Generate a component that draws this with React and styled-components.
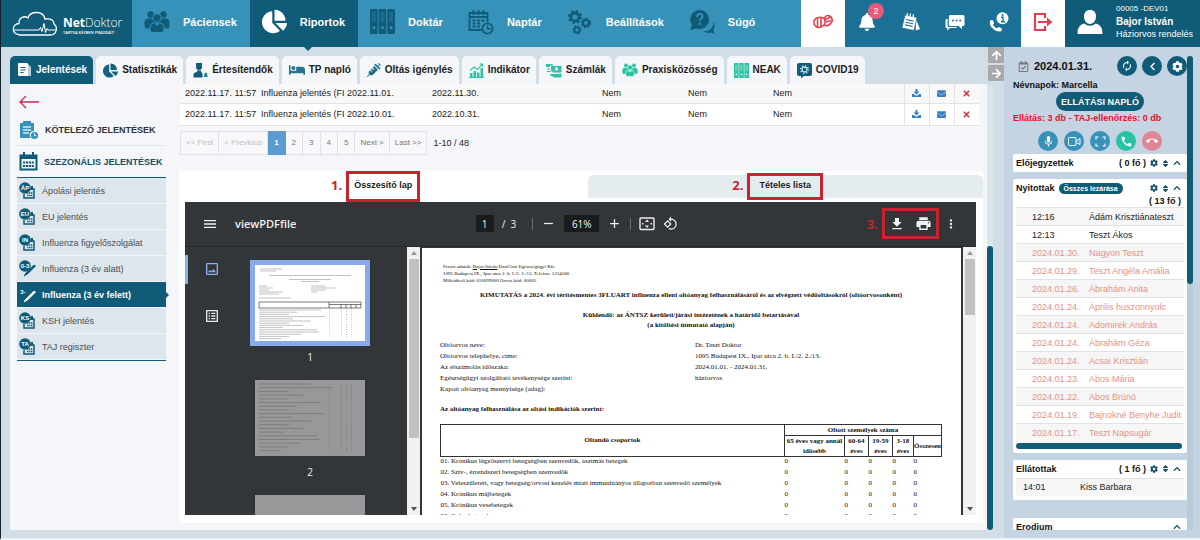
import React from 'react'
import styled, { createGlobalStyle, css } from 'styled-components'
import {
  FaArrowRight, FaArrowUp, FaBed, FaBell, FaChartPie, FaChevronLeft, FaChevronUp, FaCog,
  FaEnvelope, FaRegCalendarCheck, FaSort, FaSyringe, FaTimes
} from 'react-icons/fa'
import {
  MdAdd, MdAutorenew, MdCall, MdCallEnd, MdFileDownload, MdListAlt, MdMenu, MdMic, MdMoreVert,
  MdOutlineImage, MdPrint, MdRemove, MdRotate90DegreesCcw
} from 'react-icons/md'

const dark = '#0f5b78'
const blue = '#3692b9'
const green = '#2cc3a4'
const red = '#c8232f'

const GlobalStyle = createGlobalStyle`
  * { box-sizing: border-box; }
  body {
    margin: 0;
    font-family: "Liberation Sans", Arial, sans-serif;
    font-size: 9px;
    line-height: 12px;
    color: #222;
  }
  ul { list-style: none; margin: 0; padding: 0; }
  a { color: inherit; text-decoration: none; }
  p, h1, h2, h3 { margin: 0; font-size: inherit; }
  button, input { font: inherit; color: inherit; border: 0; margin: 0; padding: 0; background: none; }
  table { border-collapse: collapse; border-spacing: 0; }
  svg { display: block; flex: none; }
`

/* ---------- icons ---------- */

const Gear = ({ x, y, r }) => (
  <g fill='none' stroke='currentColor'>
    <circle cx={x} cy={y} r={r} strokeWidth={r * 0.7} />
    <circle cx={x} cy={y} r={r * 1.5} strokeWidth={r * 0.5} strokeDasharray={`${r * 0.6} ${r * 0.578}`} />
  </g>
)

const GearsIcon = () => (
  <svg width='26' height='26' viewBox='0 0 26 26'>
    <Gear x={8} y={8} r={4} />
    <Gear x={19} y={14} r={3} />
    <Gear x={10} y={21} r={2.6} />
  </svg>
)

const GroupIcon = ({ size = 26, edge = blue }) => (
  <svg width={size} height={size} viewBox='0 0 26 26' fill='currentColor'>
    <circle cx='6.5' cy='5.500' r='3.200' />
    <circle cx='19.500' cy='5.500' r='3.200' />
    <path d='M4 9.500h5q3 .5 3 4v6H2.500Q.5 19 .5 16.500V13q.500-3 3.500-3.500zM22 9.500h-5q-3 .5-3 4v6h9.500q2-.5 2-3V13q-.500-3-3.500-3.500z' />
    <circle cx='13' cy='9' r='4.200' stroke={edge} strokeWidth='1' />
    <path d='M10 13.800l3 2.500 3-2.500q4 .7 4 4.200v3q0 2.500-2.500 2.500h-9Q6 23.500 6 21v-3q0-3.500 4-4.200z' stroke={edge} strokeWidth='1' />
  </svg>
)

const BindersIcon = ({ size = 25, hole = blue }) => (
  <svg width={size} height={size} viewBox='0 0 24 24'>
    {[0, 8.3, 16.6].map(x => (
      <g key={x}>
        <rect x={x} width='7.4' height='24' rx='1' fill='currentColor' />
        <rect x={x + 1.8} y='2.5' width='3.8' height='10' fill={hole} opacity='.3' />
        <circle cx={x + 3.7} cy='18' r='1.4' fill={hole} />
      </g>
    ))}
  </svg>
)

const PlannerIcon = () => (
  <svg width='26' height='26' viewBox='0 0 26 26' fill='none' stroke='currentColor' strokeWidth='1.8'>
    <path d='M14 21H1.5V4h18v9M1.5 8h18M5.5 1v5M10.5 1v5M15.5 1v5' />
    <path d='M4.5 11.5h3M9 11.5h3M13.5 11.5h3M4.5 14.5h3M9 14.5h3M4.5 17.5h3M9 17.5h3' strokeWidth='2' />
    <circle cx='19.5' cy='19.5' r='5.2' />
    <path d='M19.5 16.5v3.2h3' strokeWidth='1.4' />
  </svg>
)

const HelpIcon = () => (
  <svg width='26' height='26' viewBox='0 0 26 26'>
    <path d='M24 12a8 8 0 0 1-9 10c2 2 5 2.500 7 1.500l3.500 1.500-1-4c1.500-3 1.500-6-.5-9z' fill='currentColor' />
    <path d='M10.500 1a9.500 9.500 0 1 1-3 18.500L1 21l2-5A9.500 9.500 0 0 1 10.500 1z' fill='currentColor' />
    <path d='M8 8c0-4 5.500-4 5.500-.800C13.500 9.300 10.800 9.400 10.800 12' fill='none' stroke={blue} strokeWidth='1.8' />
    <circle cx='10.800' cy='14.800' r='1.200' fill={blue} />
  </svg>
)

const PillsIcon = () => (
  <svg width='22' height='18' viewBox='0 0 22 18' fill='none' stroke='currentColor' strokeWidth='1.6'>
    <path d='M6.500 4.500A5 5 0 1 0 9 14V4.500C8.200 4.100 7.300 4.200 6.500 4.500zM9 4.500c5-.500 6 7 0 9.500' />
    <path d='M5.500 5v9M12 6l1.500-2.500a4 4 0 0 1 6.500 3.500M12 12c3.500 2 8-1 8.500-5M12 7.500l6.500-3.500M14 9l5-1.500' />
  </svg>
)

const NotesIcon = () => (
  <svg width='20' height='20' viewBox='0 0 20 20'>
    <path d='M14 5l5 12-4 1.500z' fill='#fff' />
    <path d='M4 3l12 2.500-3 13L.8 16z' fill='#fff' stroke='#1a7095' strokeWidth='.8' />
    <path d='M5 7.500l7.500 1.600M4.500 10.200l7.500 1.600M4 12.900l7.500 1.600' stroke='#1a7095' strokeWidth='1.100' />
    <path d='M6.500 1l-.5 3.500M9.500 1.500L9 5M12.500 2.100L12 5.600' stroke='#fff' strokeWidth='1.300' />
  </svg>
)

const ChatIcon = () => (
  <svg width='20' height='17' viewBox='0 0 20 17' fill='#fff'>
    <path d='M5 1h13q1.500 0 1.500 1.500v8q0 1.500-1.500 1.500h-1v3l-3.500-3H5q-1.200 0-1.200-1.500v-8Q3.800 1 5 1z' />
    <path d='M2.600 5H1.500Q.5 5 .5 6v7q0 1 1 1h.700v2.500L5 14h7l-1-1H4q-1.400 0-1.400-2z' />
    <g fill='#1a7095'><circle cx='8' cy='6.500' r='1' /><circle cx='11.600' cy='6.500' r='1' /><circle cx='15.200' cy='6.500' r='1' /></g>
  </svg>
)

const PhoneInfoIcon = () => (
  <svg width='20' height='20' viewBox='0 0 20 20'>
    <path d='M1 9c1-1.500 2.500-1.500 3.300 0l.7 2c0 1-1 1-1 1.700 1 2 2.500 3 4 3.500.9-.2 1-1.200 2-1.200l2.500 1.300c1 1 .3 2.700-1.500 3.200C5.500 20-.5 14 1 9z' fill='#fff' />
    <circle cx='13.500' cy='6.300' r='6' fill='#fff' />
    <path d='M12 5.300h2v4.500M12 9.800h4' fill='none' stroke='#1a7095' strokeWidth='1.400' />
    <circle cx='13.500' cy='3' r='1' fill='#1a7095' />
  </svg>
)

const LogoutIcon = () => (
  <svg width='20' height='20' viewBox='0 0 20 20' fill='none' stroke='currentColor' strokeWidth='2.200'>
    <path d='M12 6V2H2v16h10v-4M5 10h11' />
    <path d='M14 5.500l5.500 4.500-5.500 4.500z' fill='currentColor' stroke='none' />
  </svg>
)

const PersonIcon = () => (
  <svg width='26' height='26' viewBox='0 0 26 26' fill='#fff'>
    <path d='M13 1c4 0 6 2.700 6 6.500S16.500 15 13 15 7 11.500 7 7.500 9 1 13 1z' />
    <path d='M7.500 14.500c3 3 8 3 11 0 5 1.500 7 4 7 10.500H.5c0-6.500 2-9 7-10.500z' />
  </svg>
)

const CloudLogo = () => (
  <svg width='46' height='27' viewBox='0 0 46 27' fill='none' stroke='#fff' strokeWidth='1.300' strokeLinejoin='round'>
    <path d='M38 25H8C-1 24-.5 14 7 13.500 6.500 7 13 5.500 16 8 18 1 31 0 33 9c7-1 9 2 9 5 4 3 3 11-4 11' />
    <path d='M2 20h25l1.500-2.500 1.500 4 2-8 1.500 9 1.500-4 1 1.500h8' strokeWidth='1' />
  </svg>
)

const DocumentsIcon = () => (
  <svg width='15' height='16' viewBox='0 0 15 16'>
    <path d='M4 2h7l3 3v9H4z' fill='#fff' opacity='.7' />
    <rect x='1' y='1' width='10' height='13' rx='1' fill='#fff' />
    <path d='M3.500 5.500h5M3.500 8h5M3.500 10.500h3' stroke={dark} strokeWidth='1.200' />
  </svg>
)

const ReceptionIcon = () => (
  <svg width='15' height='15' viewBox='0 0 15 15' fill={dark}>
    <circle cx='6' cy='4' r='3' />
    <path d='M3 0h6v2.500H3zM4 7.500h4v2H4zM.5 11q1-2 3.500-2h4q1.500 0 1.500 2v3.500H.5z' />
    <path d='M11 13q0-3.500 1.700-3.500T14.500 13l.5 1h-4.500z' fill='#2b87a5' />
  </svg>
)

const IndicatorIcon = () => (
  <svg width='15' height='15' viewBox='0 0 15 15' fill={green}>
    <path d='M1 10h2.500v4H1zM4.500 8H7v6H4.500zM8 9.500h2.500V14H8zM11.500 5H14v9h-2.500z' />
    <path d='M1 7.500L5 4l3.500 2.500L13.500 1M10.500 1h3v3M0 14.600h15' fill='none' stroke={green} strokeWidth='1.100' />
  </svg>
)

const BillsIcon = () => (
  <svg width='16' height='15' viewBox='0 0 16 15' fill={green}>
    <path d='M0 1h6l2 1.500H4V4H0zM5 3h10.500v6.500H7L5 7z' />
    <circle cx='10.500' cy='6' r='1.700' fill='#f4f6fa' />
    <path d='M15 11v3H8l-4-2.500h6zM1 6h3M1 8.500h4' stroke={green} />
  </svg>
)

const VirusIcon = () => (
  <svg width='15' height='15' viewBox='0 0 15 15'>
    <path d='M2 0h11q2 0 2 2v9q0 2-2 2H7l-3 2.500V13H2q-2 0-2-2V2q0-2 2-2z' fill={dark} />
    <g fill='none' stroke='#bfe3ea'>
      <circle cx='7.500' cy='6.500' r='2.500' strokeWidth='1.300' />
      <circle cx='7.500' cy='6.500' r='4' strokeWidth='1.300' strokeDasharray='1.200 1.940' />
    </g>
  </svg>
)

const ClipboardIcon = () => (
  <svg width='20' height='20' viewBox='0 0 20 20'>
    <path d='M1 3h3V1h8v2h3v8a4 4 0 0 0-3 7H1z' fill={blue} />
    <path d='M4 7h8M4 10h8M4 13h6' stroke='#d9eaf2' strokeWidth='1.300' />
    <circle cx='15.500' cy='15.500' r='3.600' fill={blue} />
    <path d='M15.500 13.500v2.200h1.800' fill='none' stroke='#fff' />
  </svg>
)

const CalendarIcon = () => (
  <svg width='19' height='19' viewBox='0 0 19 19'>
    <path d='M1.500 3.500h16v14h-16z' fill='none' stroke={dark} strokeWidth='2' />
    <path d='M1 3h17v4H1z' fill={dark} />
    <path d='M5 0v4M14 0v4' stroke={dark} strokeWidth='2' />
    <path d='M4 10.500h11M4 14h11' stroke={dark} strokeWidth='2.200' strokeDasharray='2.200 .7' />
  </svg>
)

const ReportIcon = ({ label, vaccine, active }) => (
  <svg width='17' height='18' viewBox='0 0 17 18'>
    {vaccine
      ? <path d='M5 16l2-3 8-8 1.500 1-8 8-2 1z' fill={active ? '#fff' : dark} stroke={active ? '#fff' : dark} />
      : <g>
        <path d='M6 7h9v9H5v-4' fill='#dce6ec' stroke={dark} strokeWidth='1.500' />
        <path d='M8 11h6M8 13.500h6' stroke={dark} strokeWidth='1.400' strokeDasharray='1.400 .6' />
        <path d='M13 4v4' stroke={dark} strokeWidth='2' />
      </g>}
    {!active && <circle cx='6' cy='6' r='5.800' fill={dark} />}
    <text x={active ? 4 : 6} y='8' textAnchor='middle' fontSize='6' fontWeight='bold' fill='#fff'>{label}</text>
  </svg>
)

const TrayDownloadIcon = () => (
  <svg width='9' height='8' viewBox='0 0 9 8' fill='#3a7fbd'>
    <path d='M3.500 0h2v2.500h2l-3 3-3-3h2z' />
    <path d='M0 5h2l1.500 1.500h2L7 5h2v3H0z' />
  </svg>
)

const FitIcon = () => (
  <svg width='16' height='14' viewBox='0 0 16 14'>
    <rect x='1' y='1' width='14' height='11.500' rx='1' fill='none' stroke='#eee' strokeWidth='1.400' />
    <path d='M8 2.500L10 5H6zM8 11L10 8.500H6zM3 6h1.500v1.500H3zM11.500 6H13v1.500h-1.500z' fill='#eee' />
  </svg>
)

const CameraIcon = () => (
  <svg width='13' height='9' viewBox='0 0 13 9' fill='none' stroke='#fff'>
    <rect x='.5' y='.5' width='7.500' height='8' rx='1' /><path d='M8.500 4l3.500-2.500v6L8.500 5.500' />
  </svg>
)

const FrameIcon = () => (
  <svg width='11' height='11' viewBox='0 0 11 11' fill='none' stroke='#fff' strokeWidth='1.200'>
    <path d='M1 3.500V1h2.500M7.500 1H10v2.500M10 7.500V10H7.500M3.500 10H1V7.500' />
  </svg>
)

/* ---------- header ---------- */

const StyledApp = styled.div`
  display: flex;
  flex-direction: column;
  height: 100vh;
  overflow: hidden;
  border-left: 1px solid #16232b;
  border-bottom: 2px solid #edf4f9;
  background: #d1dee7;
`
const StyledHeader = styled.header`
  display: flex;
  flex: none;
  height: 47px;
  color: #fff;
  background: ${blue};
`
const StyledLogo = styled.a`
  display: flex;
  align-items: center;
  gap: 5px;
  width: 131px;
  padding-left: 11px;
  background: ${dark};
`
const StyledLogoText = styled.span`
  display: flex;
  flex-direction: column;
  padding-top: 5px;
  font: 300 12px/14px "Open Sans", sans-serif;
  b { font-weight: 700; }
  small { font-size: 4px; line-height: 6px; font-weight: 600; white-space: nowrap; }
`
const StyledNav = styled.nav`
  display: flex;
  flex: 1;
`
const StyledNavItem = styled.a`
  position: relative;
  display: flex;
  align-items: center;
  gap: 13px;
  padding: 0 13px 4px 12px;
  font-size: 11px;
  font-weight: bold;
  background: ${props => props.$active ? dark : 'transparent'};
  svg { color: ${props => props.$active ? '#fff' : dark}; }
  ${props => props.$active && css`
    &::after {
      content: '';
      position: absolute;
      top: 100%;
      left: 50%;
      border: 4px solid transparent;
      border-top-color: ${dark};
    }
  `}
`
const StyledTool = styled.button`
  position: relative;
  display: flex;
  align-items: center;
  justify-content: center;
  width: 44px;
  padding-bottom: 3px;
  color: ${props => props.$light ? '#e0404f' : '#fff'};
  background: ${props => props.$light ? '#fff' : '#1a7095'};
`
const StyledBadge = styled.span`
  position: absolute;
  top: 3px;
  right: 5px;
  width: 16px;
  border-radius: 8px;
  line-height: 16px;
  text-align: center;
  background: #ec5a7b;
`
const StyledUser = styled.div`
  display: flex;
  align-items: center;
  gap: 13px;
  width: 135px;
  padding: 0 0 4px 12px;
  background: ${dark};
  white-space: nowrap;
`
const StyledUserText = styled.div`
  p { font-size: 8px; line-height: 12px; }
  h2 { font-size: 10px; line-height: 13px; }
  p:last-child { font-size: 9px; line-height: 13px; }
`

/* ---------- main column ---------- */

const StyledBody = styled.div`
  display: flex;
  flex: 1;
  min-height: 0;
`
const StyledMain = styled.main`
  display: flex;
  flex-direction: column;
  flex: 1;
  min-width: 0;
  padding: 9px 0 8px 9px;
`
const StyledTabs = styled.nav`
  display: flex;
  flex: none;
  gap: 3px;
  height: 28px;
`
const StyledTab = styled.a`
  display: flex;
  align-items: center;
  gap: 4px;
  padding: 0 6px 0 7px;
  border-radius: 5px 5px 0 0;
  font-size: 10px;
  font-weight: bold;
  white-space: nowrap;
  color: ${props => props.$active ? '#fff' : '#222'};
  background: ${props => props.$active ? dark : '#f4f6fa'};
`
const StyledPanel = styled.div`
  display: flex;
  flex: 1;
  gap: 13px;
  min-height: 0;
  overflow: hidden;
  padding: 0 4px 0 7px;
  background: #f4f6fa;
`
const StyledGutter = styled.div`
  display: flex;
  flex-direction: column;
  flex: none;
  width: 17px;
  padding-bottom: 8px;
`
const StyledScrollTrack = styled.div`
  display: flex;
  flex-direction: column;
  justify-content: flex-end;
  flex: 1;
  width: 6px;
  margin-top: 3px;
  background: #d9e7ec;
`
const StyledScrollThumb = styled.div`
  height: ${props => props.$size};
  border-radius: 3px;
  background: ${dark};
`
const StyledMoveBtn = styled.button`
  display: flex;
  align-items: center;
  justify-content: center;
  width: 16px;
  height: 16px;
  margin: 0 0 2px 1px;
  color: #fff;
  background: #a6a8a9;
`

/* ---------- left menu ---------- */

const StyledMenu = styled.aside`
  flex: none;
  width: 149px;
`
const StyledBack = styled.button`
  display: block;
  height: 30px;
  padding: 6px 0 0 2px;
`
const StyledSection = styled.a`
  display: flex;
  align-items: center;
  gap: 6px;
  height: 32px;
  padding-left: 2px;
  border-bottom: 1px solid ${props => props.$open ? dark : '#e0e5ea'};
  font-weight: bold;
  white-space: nowrap;
  color: ${props => props.$open ? '#17506a' : '#333'};
`
const StyledMenuItem = styled.a`
  position: relative;
  display: flex;
  align-items: center;
  gap: 6px;
  height: 26px;
  padding-left: 2px;
  border-bottom: 1px solid #f2f6f8;
  color: #4a4f54;
  background: #dce6ec;
  ${props => props.$active && css`
    font-weight: bold;
    color: #fff;
    background: ${dark};
    &::after {
      content: '';
      position: absolute;
      left: 100%;
      border: 3px solid transparent;
      border-left-color: ${dark};
    }
  `}
`
const StyledMenuList = styled.ul`
  border-bottom: 1px solid ${dark};
`

/* ---------- report list ---------- */

const StyledContent = styled.section`
  display: flex;
  flex-direction: column;
  flex: 1;
  min-width: 0;
`
const StyledReportTable = styled.table`
  width: calc(100% - 5px);
  margin-left: 1px;
  table-layout: fixed;
  background: #fff;
  td {
    height: 22px;
    padding: 0 0 0 5px;
    border-bottom: 1px solid #e3e3e3;
    white-space: nowrap;
  }
  tr:first-child td { height: 19px; background: #f8f8f9; }
`
const StyledActionCell = styled.td`
  && { padding: 0; border-left: 1px solid #e3e3e3; }
  button { display: block; margin: auto; }
`
const StyledPager = styled.nav`
  display: flex;
  align-items: center;
  height: 24px;
  margin: 5px 0 16px 1px;
`
const StyledPageBtn = styled.button`
  height: 24px;
  padding: 0 ${props => props.$wide ? '5px' : '6px'};
  border: 1px solid #e1e3e8;
  border-left-width: ${props => props.$first ? '1px' : '0'};
  font-size: 8px;
  color: ${props => props.disabled ? '#b9bcc0' : '#777'};
  background: #f8f8fa;
  ${props => props.$active && css`
    border-color: #5b9bd1;
    font-weight: bold;
    color: #fff;
    background: #5b9bd1;
  `}
`
const StyledTotal = styled.span`
  margin-left: 6px;
`

/* ---------- pdf viewer ---------- */

const StyledViewerCard = styled.div`
  display: flex;
  flex-direction: column;
  flex: 1;
  min-height: 0;
  margin-bottom: 7px;
  padding-bottom: 8px;
  background: #fff;
`
const StyledViewTabs = styled.div`
  display: grid;
  grid-template-columns: 408fr 395fr;
  align-items: center;
  height: 31px;
`
const StyledViewTab = styled.div`
  display: flex;
  align-items: center;
  justify-content: center;
  height: ${props => props.$active ? '31px' : '23px'};
  border-radius: 5px 5px 0 0;
  background: ${props => props.$active ? '#fff' : '#e5ecf0'};
`
const StyledMark = styled.span`
  position: relative;
  display: flex;
  align-items: center;
  justify-content: center;
  border: 3px solid ${red};
  height: ${props => props.$tall ? '31px' : '27px'};
  padding: 0 ${props => props.$pad}px;
  gap: 10px;
  font-weight: bold;
  &:is(button) { padding-bottom: 3px; }
`
const StyledMarkNo = styled.b`
  position: absolute;
  right: 100%;
  margin-right: 7px;
  font: 700 13px/18px "Open Sans", sans-serif;
  color: ${red};
`
const StyledViewer = styled.div`
  display: flex;
  flex-direction: column;
  flex: 1;
  min-height: 0;
  margin: 0 7px 0 6px;
  font-family: "Open Sans", sans-serif;
  color: #f1f1f1;
  background: #323639;
`
const StyledToolbar = styled.div`
  display: grid;
  grid-template-columns: 270fr auto 276fr;
  align-items: center;
  flex: none;
  height: 45px;
  padding: 0 18px 0 17px;
  border-bottom: 1px solid #26292b;
`
const StyledToolGroup = styled.div`
  display: flex;
  align-items: center;
  justify-content: ${props => props.$end ? 'flex-end' : 'flex-start'};
  gap: ${props => props.$gap}px;
  font-size: 10px;
  h3 { font-size: 11px; font-weight: 600; }
  button { display: block; }
`
const StyledNumberInput = styled.input`
  width: ${props => props.$wide ? '35px' : '18px'};
  height: 17px;
  text-align: center;
  background: #191b1c;
`
const StyledDivider = styled.span`
  width: 1px;
  height: 12px;
  margin-left: ${props => props.$far ? '8px' : '0'};
  background: #6b6e70;
`
const StyledPanes = styled.div`
  display: flex;
  flex: 1;
  min-height: 0;
  overflow: hidden;
`
const StyledRail = styled.div`
  display: flex;
  flex-direction: column;
  align-items: center;
  flex: none;
  width: 53px;
  padding-top: 8px;
`
const StyledRailBtn = styled.button`
  display: flex;
  align-items: center;
  justify-content: center;
  width: 53px;
  height: 29px;
  margin-bottom: 18px;
  border-left: 3px solid ${props => props.$active ? '#8ab0f0' : 'transparent'};
  border-right: 3px solid transparent;
  color: ${props => props.$active ? '#8ab0f0' : '#e8e8e8'};
`
const StyledThumbs = styled.div`
  flex: none;
  width: 169px;
  padding: 13px 0 0 12px;
  overflow: hidden;
`
const StyledThumb = styled.figure`
  width: 120px;
  margin: 0 0 10px;
  text-align: center;
  font-size: 10px;
  svg {
    width: 120px;
    height: 86px;
    border: 5px solid ${props => props.$active ? '#86abe8' : 'transparent'};
    background: ${props => props.$active ? '#fff' : '#98989a'};
    background-clip: padding-box;
  }
  figcaption { line-height: 16px; padding-top: 3px; }
`
const StyledPdfScroll = styled.div`
  display: flex;
  flex-direction: column;
  flex: none;
  align-items: center;
  width: 13px;
  color: #505050;
  background: #f1f1f1;
  svg { margin: 4px 0; }
`
const StyledPdfThumb = styled.div`
  width: 10px;
  flex: ${props => props.$share};
  background: #c1c1c1;
`
const StyledPdfRest = styled.div`
  flex: ${props => props.$share};
`

/* ---------- pdf page ---------- */

const StyledPage = styled.article`
  flex: 1;
  min-width: 0;
  overflow: hidden;
  margin: 1px 2px 0;
  padding: 15px 19px 0 18px;
  font: 7px/11px "Liberation Serif", "Times New Roman", serif;
  color: #111;
  background: #fff;
  h2 { text-align: center; line-height: 10px; margin-bottom: 10px; }
`
const StyledPractice = styled.p`
  && { margin: 0 0 6px 3px; }
  font-size: 5px;
  line-height: 7px;
`
const StyledFacts = styled.dl`
  display: grid;
  grid-template-columns: 255fr 247fr;
  margin: 0 0 9px;
  dt, dd { margin: 0; min-height: 11px; }
`
const StyledDoseTable = styled.table`
  width: 100%;
  margin-top: 9px;
  table-layout: fixed;
  th { border: 1px solid #333; padding: 0; line-height: 10px; }
  td { padding: 0; height: 11px; line-height: 9px; }
`

/* ---------- right sidebar ---------- */

const StyledSide = styled.aside`
  display: flex;
  flex: none;
  width: 196px;
  padding: 9px 7px 8px 9px;
  background: #c5d4e2;
`
const StyledSideScroll = styled.div`
  flex: 1;
  min-width: 0;
  overflow: hidden;
  font-weight: bold;
  color: #111;
`
const StyledSideTrack = styled.div`
  width: 6px;
  background: #b9cbd9;
`
const StyledDateRow = styled.div`
  display: flex;
  align-items: center;
  gap: 5px;
  padding-left: 5px;
  margin-bottom: 3px;
  h2 { flex: 1; font-size: 11px; }
`
const StyledRound = styled.button`
  display: flex;
  align-items: center;
  justify-content: center;
  width: 20px;
  height: 20px;
  border-radius: 10px;
  color: #fff;
  background: ${props => props.$color || dark};
`
const StyledLogBtn = styled.button`
  display: block;
  height: 19px;
  margin: 1px auto;
  padding: 0 5px;
  border-radius: 10px;
  font-weight: bold;
  color: #fff;
  background: ${dark};
`
const StyledAlert = styled.p`
  color: #e3122a;
  white-space: nowrap;
`
const StyledCalls = styled.div`
  display: flex;
  justify-content: center;
  gap: 6px;
  margin: 7px 0 3px;
`
const StyledCard = styled.section`
  margin-bottom: ${props => props.$gap || 7}px;
  padding: 0 3px ${props => props.$bottom || 0}px;
  border-radius: 2px;
  background: #fff;
`
const StyledCardHead = styled.header`
  display: flex;
  flex-wrap: wrap;
  align-items: center;
  gap: 0 4px;
  padding-right: 3px;
  color: #111;
  h3 { line-height: 18px; }
  svg { color: #17506a; }
`
const StyledCount = styled.span`
  margin-left: auto;
  ${props => props.$below && css`
    order: 2;
    width: 100%;
    margin-top: -2px;
    text-align: right;
  `}
`
const StyledHeadIcons = styled.span`
  display: flex;
  align-items: center;
  gap: 3px;
  margin-left: ${props => props.$push ? 'auto' : '0'};
`
const StyledPill = styled.button`
  height: 11px;
  padding: 0 5px;
  border-radius: 6px;
  font-size: 7px;
  line-height: 11px;
  font-weight: bold;
  color: #fff;
  background: ${dark};
`
const StyledPatients = styled.table`
  width: 100%;
  table-layout: fixed;
  font-weight: normal;
  td {
    height: 18px;
    padding: 0;
    border-top: 1px solid #e1e1e1;
    white-space: nowrap;
  }
  td:first-child { width: ${props => props.$indent + 57}px; padding-left: ${props => props.$indent}px; }
  tr:nth-child(odd) td { background: #f6f6f6; }
`
const StyledPatient = styled.tr`
  color: ${props => props.$late ? '#e59384' : '#222'};
`
const StyledHScroll = styled.div`
  height: 6px;
  margin: 1px 2px 0 0;
  border-radius: 3px;
  background: ${dark};
`

/* ---------- data ---------- */

const nav = [
  { txt: 'Páciensek', icon: <GroupIcon /> },
  { txt: 'Riportok', icon: <FaChartPie size={25} />, active: true },
  { txt: 'Doktár', icon: <BindersIcon /> },
  { txt: 'Naptár', icon: <PlannerIcon /> },
  { txt: 'Beállítások', icon: <GearsIcon /> },
  { txt: 'Súgó', icon: <HelpIcon /> }
]

const tabs = [
  { txt: 'Jelentések', icon: <DocumentsIcon />, active: true },
  { txt: 'Statisztikák', icon: <FaChartPie size={15} color='#17607d' /> },
  { txt: 'Értesítendők', icon: <ReceptionIcon /> },
  { txt: 'TP napló', icon: <FaBed size={16} color='#27758f' /> },
  { txt: 'Oltás igénylés', icon: <FaSyringe size={14} color='#27708b' /> },
  { txt: 'Indikátor', icon: <IndicatorIcon /> },
  { txt: 'Számlák', icon: <BillsIcon /> },
  { txt: 'Praxisközösség', icon: <GroupIcon size={16} edge='#f4f6fa' />, tint: green },
  { txt: 'NEAK', icon: <BindersIcon size={15} hole='#f4f6fa' />, tint: green },
  { txt: 'COVID19', icon: <VirusIcon /> }
]

const StyledTint = styled.span`
  color: ${props => props.$color || 'inherit'};
`

const menu = [
  { txt: 'Ápolási jelentés', label: 'ÁP' },
  { txt: 'EU jelentés', label: 'EU' },
  { txt: 'Influenza figyelőszolgálat', label: 'IN' },
  { txt: 'Influenza (3 év alatt)', label: '0-3', vaccine: true },
  { txt: 'Influenza (3 év felett)', label: '3-', vaccine: true, active: true },
  { txt: 'KSH jelentés', label: 'KS' },
  { txt: 'TAJ regiszter', label: 'TA' }
]

const reports = [
  ['2022.11.17. 11:57', 'Influenza jelentés (FI', '2022.11.01.', '2022.11.30.'],
  ['2022.11.17. 11:57', 'Influenza jelentés (FI', '2022.10.01.', '2022.10.31.']
]

const facts = [
  ['Oltóorvos neve:', 'Dr. Teszt Doktor'],
  ['Oltóorvos telephelye, címe:', '1095 Budapest IX., Ipar utca 2. b. I./2. 2./13.'],
  ['Az elszámolás időszaka:', '2024.01.01. - 2024.01.31.'],
  ['Egészségügyi szolgáltató tevékenysége szerint:', 'háziorvos'],
  ['Kapott oltóanyag mennyisége (adag):', '']
]

const groups = [
  '01. Krónikus légzőszervi betegségben szenvedők, asztmás betegek',
  '02. Szív-, érrendszeri betegségben szenvedők',
  '03. Veleszületett, vagy betegség/orvosi kezelés miatt immunhiányos állapotban szenvedő személyek',
  '04. Krónikus májbetegek',
  '05. Krónikus vesebetegek',
  '06. Cukorbetegek'
]

const opened = [
  ['12:16', 'Ádám Krisztiánateszt'],
  ['12:13', 'Teszt Ákos'],
  ['2024.01.30.', 'Nagyon Teszt'],
  ['2024.01.29.', 'Teszt Angéla Amália'],
  ['2024.01.26.', 'Ábrahám Anita'],
  ['2024.01.24.', 'Április huszonnyolc'],
  ['2024.01.24.', 'Adomirek András'],
  ['2024.01.24.', 'Ábrahám Géza'],
  ['2024.01.24.', 'Acsai Krisztián'],
  ['2024.01.23.', 'Abos Mária'],
  ['2024.01.22.', 'Abos Brúnó'],
  ['2024.01.19.', 'Bajnokné Benyhe Judit'],
  ['2024.01.17.', 'Teszt Napsugár']
]

/* ---------- parts ---------- */

const Header = () => (
  <StyledHeader>
    <StyledLogo href='#'>
      <CloudLogo />
      <StyledLogoText>
        <span><b>Net</b>Doktor</span>
        <small>TARTSA KÉZBEN PRAXISÁT!</small>
      </StyledLogoText>
    </StyledLogo>
    <StyledNav>
      {nav.map(item => (
        <StyledNavItem key={item.txt} href='#' $active={item.active}>{item.icon}{item.txt}</StyledNavItem>
      ))}
    </StyledNav>
    <StyledTool $light aria-label='Gyógyszerek'><PillsIcon /></StyledTool>
    <StyledTool aria-label='Értesítések'><FaBell size={18} /><StyledBadge>2</StyledBadge></StyledTool>
    <StyledTool aria-label='Jegyzetek'><NotesIcon /></StyledTool>
    <StyledTool aria-label='Üzenetek'><ChatIcon /></StyledTool>
    <StyledTool aria-label='Telefon'><PhoneInfoIcon /></StyledTool>
    <StyledTool $light aria-label='Kilépés'><LogoutIcon /></StyledTool>
    <StyledUser>
      <PersonIcon />
      <StyledUserText>
        <p>00005 -DEV01</p>
        <h2>Bajor István</h2>
        <p>Háziorvos rendelés</p>
      </StyledUserText>
    </StyledUser>
  </StyledHeader>
)

const Menu = () => (
  <StyledMenu>
    <StyledBack aria-label='Vissza'>
      <svg width='20' height='14' viewBox='0 0 20 14' fill='none' stroke='#c92a4b' strokeWidth='1.3'>
        <path d='M7 1L1 7l6 6M1 7h19' />
      </svg>
    </StyledBack>
    <StyledSection href='#'><ClipboardIcon />KÖTELEZŐ JELENTÉSEK</StyledSection>
    <StyledSection href='#' $open><CalendarIcon />SZEZONÁLIS JELENTÉSEK</StyledSection>
    <StyledMenuList>
      {menu.map(item => (
        <li key={item.txt}>
          <StyledMenuItem href='#' $active={item.active}>
            <ReportIcon label={item.label} vaccine={item.vaccine} active={item.active} />
            {item.txt}
          </StyledMenuItem>
        </li>
      ))}
    </StyledMenuList>
  </StyledMenu>
)

const Reports = () => (
  <StyledReportTable>
    <colgroup>
      <col width='76' /><col width='86' /><col width='85' /><col width='170' />
      <col width='86' /><col width='85' /><col /><col width='25' /><col width='25' /><col width='25' />
    </colgroup>
    <tbody>
      {reports.map(([date, name, from, to]) => (
        <tr key={from}>
          <td>{date}</td><td>{name}</td><td>{from}</td><td>{to}</td>
          <td>Nem</td><td>Nem</td><td>Nem</td>
          <StyledActionCell><button aria-label='Letöltés'><TrayDownloadIcon /></button></StyledActionCell>
          <StyledActionCell><button aria-label='Küldés'><FaEnvelope size={9} color='#3a7fbd' /></button></StyledActionCell>
          <StyledActionCell><button aria-label='Törlés'><FaTimes size={9} color='#d8434e' /></button></StyledActionCell>
        </tr>
      ))}
    </tbody>
  </StyledReportTable>
)

const Pager = () => (
  <StyledPager>
    <StyledPageBtn disabled $first $wide>&lt;&lt; First</StyledPageBtn>
    <StyledPageBtn disabled $wide>&lt; Previous</StyledPageBtn>
    {[1, 2, 3, 4, 5].map(n => <StyledPageBtn key={n} $active={n === 1}>{n}</StyledPageBtn>)}
    <StyledPageBtn $wide>Next &gt;</StyledPageBtn>
    <StyledPageBtn $wide>Last &gt;&gt;</StyledPageBtn>
    <StyledTotal>1-10 / 48</StyledTotal>
  </StyledPager>
)

const textLines = [52, 74, 30, 44, 30, 62, 38, 30, 66, 34, 52, 30, 44, 24, 58, 60, 42, 30, 22]

const PageThumb = ({ no, active }) => (
  <StyledThumb $active={active}>
    <svg viewBox='0 0 110 76' preserveAspectRatio='none' stroke={active ? '#999' : '#6c6c6e'} strokeWidth='.6' fill='none'>
      {active && (
        <g>
          <path d='M5 4h22M5 6h16M14 10.500h82M34 14.500h42M46 16.500h18' />
          <path d='M4 21h8M4 23h14M4 25h10M4 27h24M4 29h20M56 21h14M56 23h24M56 25h15M56 27h6M4 33h32' />
          <path d='M4 37h102v6H4zM74 37v6M74 39.500h32M86 39.500v3.500M91 39.500v3.500M96 39.500v3.500M101 39.500v3.500' stroke='#222' />
        </g>
      )}
      {no < 3 && textLines.slice(active ? 5 : 0).map((w, i) => (
        <path key={i} d={`M4 ${(active ? 45 : 4) + i * (active ? 2.2 : 3.7)}h${w}`} />
      ))}
      {no < 3 && <path d={`M74.500 ${active ? 44 : 4}V72M86.500 ${active ? 44 : 4}V72M91.500 ${active ? 44 : 4}V72M96.500 ${active ? 44 : 4}V72`} strokeDasharray='1 1.5' />}
    </svg>
    {no < 3 && <figcaption>{no}</figcaption>}
  </StyledThumb>
)

const PdfScroll = ({ share, rest }) => (
  <StyledPdfScroll>
    <svg width='6' height='4' viewBox='0 0 6 4' fill='#999'><path d='M0 4l3-4 3 4z' /></svg>
    <StyledPdfThumb $share={share} />
    <StyledPdfRest $share={rest} />
    <svg width='6' height='4' viewBox='0 0 6 4' fill='currentColor'><path d='M0 0l3 4 3-4z' /></svg>
  </StyledPdfScroll>
)

const PdfPage = () => (
  <StyledPage>
    <StyledPractice>
      Praxis adatok: <u>Bajor István</u> DariCom Egészségügyi Kft.<br />
      1095 Budapest IX., Ipar utca 2. b. I./2. 2./13. Telefon: 1234566<br />
      Működtető kód: 010099000 Orvos kód: 00005
    </StyledPractice>
    <h2>KIMUTATÁS a 2024. évi térítésmentes 3FLUART influenza elleni oltóanyag felhasználásáról és az elvégzett védőoltásokról (oltóorvosonként)</h2>
    <h2>Küldendő: az ÁNTSZ kerületi/járási intézetének a határidő betartásával<br />(a kitöltési útmutató alapján)</h2>
    <StyledFacts>
      {facts.map(([label, value]) => (
        <React.Fragment key={label}><dt>{label}</dt><dd>{value}</dd></React.Fragment>
      ))}
    </StyledFacts>
    <b>Az oltóanyag felhasználása az oltási indikációk szerint:</b>
    <StyledDoseTable>
      <colgroup>
        <col /><col width='60' /><col width='24' /><col width='24' /><col width='21' /><col width='28' />
      </colgroup>
      <thead>
        <tr><th rowSpan='2'>Oltandó csoportok</th><th colSpan='5'>Oltott személyek száma</th></tr>
        <tr>
          <th>65 éves vagy annál idősebb</th><th>60-64 éves</th><th>19-59 éves</th><th>3-18 éves</th><th>Összesen</th>
        </tr>
      </thead>
      <tbody>
        {groups.map(g => (
          <tr key={g}><td>{g}</td><td>0</td><td>0</td><td>0</td><td>0</td><td>0</td></tr>
        ))}
      </tbody>
    </StyledDoseTable>
  </StyledPage>
)

const Viewer = () => (
  <StyledViewerCard>
    <StyledViewTabs>
      <StyledViewTab $active>
        <StyledMark as='button' $tall $pad={5}><StyledMarkNo>1.</StyledMarkNo>Összesítő lap</StyledMark>
      </StyledViewTab>
      <StyledViewTab>
        <StyledMark as='button' $pad={9}><StyledMarkNo>2.</StyledMarkNo>Tételes lista</StyledMark>
      </StyledViewTab>
    </StyledViewTabs>
    <StyledViewer>
      <StyledToolbar>
        <StyledToolGroup $gap={17}>
          <button aria-label='Menü'><MdMenu size={16} /></button>
          <h3>viewPDFfile</h3>
        </StyledToolGroup>
        <StyledToolGroup $gap={8}>
          <StyledNumberInput aria-label='Oldal' defaultValue='1' />
          <span>/&nbsp; 3</span>
          <StyledDivider $far />
          <button aria-label='Kicsinyítés'><MdRemove size={15} /></button>
          <StyledNumberInput $wide aria-label='Nagyítás' defaultValue='61%' />
          <button aria-label='Nagyítás növelése'><MdAdd size={15} /></button>
          <StyledDivider />
          <button aria-label='Oldalhoz igazítás'><FitIcon /></button>
          <button aria-label='Forgatás'><MdRotate90DegreesCcw size={15} /></button>
        </StyledToolGroup>
        <StyledToolGroup $end $gap={5}>
          <StyledMark $tall $pad={4}>
            <StyledMarkNo>3.</StyledMarkNo>
            <button aria-label='Letöltés'><MdFileDownload size={16} /></button>
            <button aria-label='Nyomtatás'><MdPrint size={17} /></button>
          </StyledMark>
          <button aria-label='További műveletek'><MdMoreVert size={14} /></button>
        </StyledToolGroup>
      </StyledToolbar>
      <StyledPanes>
        <StyledRail>
          <StyledRailBtn $active aria-label='Bélyegképek'><MdOutlineImage size={16} /></StyledRailBtn>
          <StyledRailBtn aria-label='Tartalom'><MdListAlt size={16} /></StyledRailBtn>
        </StyledRail>
        <StyledThumbs>
          <PageThumb no={1} active />
          <PageThumb no={2} />
          <PageThumb no={3} />
        </StyledThumbs>
        <PdfScroll share={178} rest={65} />
        <PdfPage />
        <PdfScroll share={56} rest={187} />
      </StyledPanes>
    </StyledViewer>
  </StyledViewerCard>
)

const CardHead = ({ title, count, below, children }) => (
  <StyledCardHead>
    <h3>{title}</h3>
    {children}
    {count && <StyledCount $below={below}>( {count} fő )</StyledCount>}
    <StyledHeadIcons $push={below || !count}>
      {count && <FaCog size={8} />}
      {count && <FaSort size={9} />}
      <FaChevronUp size={8} />
    </StyledHeadIcons>
  </StyledCardHead>
)

const Side = () => (
  <StyledSide>
    <StyledSideScroll>
      <StyledDateRow>
        <FaRegCalendarCheck size={11} color='#777' />
        <h2>2024.01.31.</h2>
        <StyledRound aria-label='Frissítés'><MdAutorenew size={12} /></StyledRound>
        <StyledRound aria-label='Előző'><FaChevronLeft size={9} /></StyledRound>
        <StyledRound aria-label='Beállítások'><FaCog size={11} /></StyledRound>
      </StyledDateRow>
      <p>Névnapok: Marcella</p>
      <StyledLogBtn>ELLÁTÁSI NAPLÓ</StyledLogBtn>
      <StyledAlert>Ellátás: 3 db - TAJ-ellenőrzés: 0 db</StyledAlert>
      <StyledCalls>
        <StyledRound $color={blue} aria-label='Mikrofon'><MdMic size={13} /></StyledRound>
        <StyledRound $color={blue} aria-label='Kamera'><CameraIcon /></StyledRound>
        <StyledRound $color={blue} aria-label='Teljes képernyő'><FrameIcon /></StyledRound>
        <StyledRound $color='#27c3a5' aria-label='Hívás'><MdCall size={13} /></StyledRound>
        <StyledRound $color='#e08595' aria-label='Hívás vége'><MdCallEnd size={12} /></StyledRound>
      </StyledCalls>
      <StyledCard><CardHead title='Előjegyzettek' count='0' /></StyledCard>
      <StyledCard $bottom={4}>
        <CardHead title='Nyitottak' count='13' below><StyledPill>Összes lezárása</StyledPill></CardHead>
        <StyledPatients $indent={16}>
          <tbody>
            {opened.map(([time, name]) => (
              <StyledPatient key={name} $late={time.length > 5}><td>{time}</td><td>{name}</td></StyledPatient>
            ))}
          </tbody>
        </StyledPatients>
        <StyledHScroll />
      </StyledCard>
      <StyledCard $gap={18} $bottom={4}>
        <CardHead title='Ellátottak' count='1' />
        <StyledPatients $indent={7}>
          <tbody>
            <StyledPatient><td>14:01</td><td>Kiss Barbara</td></StyledPatient>
          </tbody>
        </StyledPatients>
      </StyledCard>
      <StyledCard><CardHead title='Erodium' /></StyledCard>
    </StyledSideScroll>
    <StyledSideTrack><StyledScrollThumb $size='48%' /></StyledSideTrack>
  </StyledSide>
)

export default function App () {
  return (
    <StyledApp>
      <GlobalStyle />
      <Header />
      <StyledBody>
        <StyledMain>
          <StyledTabs>
            {tabs.map(tab => (
              <StyledTab key={tab.txt} href='#' $active={tab.active}>
                <StyledTint $color={tab.tint}>{tab.icon}</StyledTint>
                {tab.txt}
              </StyledTab>
            ))}
          </StyledTabs>
          <StyledPanel>
            <Menu />
            <StyledContent>
              <Reports />
              <Pager />
              <Viewer />
            </StyledContent>
          </StyledPanel>
        </StyledMain>
        <StyledGutter>
          <StyledMoveBtn aria-label='Fel'><FaArrowUp size={11} /></StyledMoveBtn>
          <StyledMoveBtn aria-label='Jobbra'><FaArrowRight size={11} /></StyledMoveBtn>
          <StyledScrollTrack><StyledScrollThumb $size='64%' /></StyledScrollTrack>
        </StyledGutter>
        <Side />
      </StyledBody>
    </StyledApp>
  )
}
